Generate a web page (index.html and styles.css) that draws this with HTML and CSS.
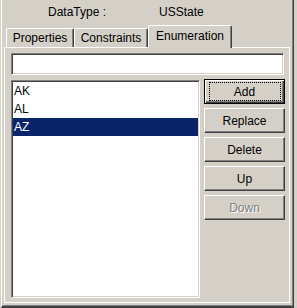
FILE: index.html
```html
<!DOCTYPE html>
<html>
<head>
<meta charset="utf-8">
<link rel="stylesheet" href="styles.css">
</head>
<body>
<div class="frame">
  <div class="header"><span class="label">DataType :</span><span class="value">USState</span></div>
  <div class="tabs">
    <div class="tab t-props">Properties</div>
    <div class="tab t-cons">Constraints</div>
    <div class="tab active t-enum">Enumeration</div>
  </div>
  <div class="panel">
    <div class="field"></div>
    <div class="row">
      <div class="list">
        <div class="item">AK</div>
        <div class="item">AL</div>
        <div class="item selected">AZ</div>
      </div>
      <div class="buttons">
        <div class="btn default">Add</div>
        <div class="btn">Replace</div>
        <div class="btn">Delete</div>
        <div class="btn">Up</div>
        <div class="btn disabled">Down</div>
      </div>
    </div>
  </div>
</div>
</body>
</html>
```
FILE: styles.css
```css
html, body {
  margin: 0;
  padding: 0;
  background: #d4d0c8;
}
body {
  font-family: "Liberation Sans", Arial, sans-serif;
  font-size: 12px;
  color: #000;
  width: 297px;
  height: 308px;
  overflow: hidden;
}
.frame {
  box-sizing: border-box;
  margin-left: 1px;
  width: 293px;
  height: 308px;
  border-left: 1px solid #fff;
  border-right: 1px solid #404040;
  border-bottom: 2px solid #404040;
  box-shadow: inset -1px -1px #808080;
}
.header {
  box-sizing: border-box;
  height: 25px;
  padding: 3px 0 0 46px;
  line-height: 18px;
  display: flex;
}
.label {
  width: 111px;
}
.tabs {
  display: flex;
  align-items: flex-end;
  height: 22px;
  padding-left: 4px;
  position: relative;
  z-index: 1;
}
.tab {
  box-sizing: border-box;
  height: 19px;
  border: 1px solid #fff;
  border-bottom: none;
  border-right-color: #404040;
  box-shadow: inset -1px 0 #808080;
  border-radius: 2px 2px 0 0;
  text-align: center;
  line-height: 14px;
  padding-top: 2px;
  background: #d4d0c8;
}
.t-props { width: 68px; }
.t-cons { width: 74px; }
.t-enum { width: 84px; }
.tab.active {
  height: 23px;
  margin-bottom: -1px;
  padding-top: 3px;
}
.panel {
  box-sizing: border-box;
  margin-left: 2px;
  width: 286px;
  height: 256px;
  border: 1px solid #fff;
  padding: 5px 0 0 6px;
}
.field {
  box-sizing: border-box;
  width: 273px;
  height: 22px;
  background: #fff;
  border: 1px solid;
  border-color: #808080 #fff #fff #808080;
  box-shadow: inset 1px 1px #404040, inset -1px -1px #d4d0c8;
}
.row {
  display: flex;
  gap: 4px;
  margin-top: 4px;
}
.list {
  box-sizing: border-box;
  width: 189px;
  height: 218px;
  margin-top: 1px;
  padding: 1px;
  background: #fff;
  border: 1px solid;
  border-color: #808080 #fff #fff #808080;
  box-shadow: inset 1px 1px #404040, inset -1px -1px #d4d0c8;
}
.item {
  height: 18px;
  line-height: 18px;
  padding-left: 1px;
}
.item.selected {
  background: #0a246a;
  color: #fff;
}
.buttons {
  display: flex;
  flex-direction: column;
  gap: 4px;
  width: 81px;
}
.btn {
  position: relative;
  box-sizing: border-box;
  height: 25px;
  display: flex;
  align-items: center;
  justify-content: center;
  border: 1px solid;
  border-color: #fff #404040 #404040 #fff;
  box-shadow: inset -1px -1px #808080;
}
.btn.default {
  border-color: #000;
  box-shadow: inset 1px 1px #fff, inset -1px -1px #404040, inset -2px -2px #808080;
}
.btn.default::after {
  content: "";
  position: absolute;
  left: 4px;
  top: 2px;
  right: 3px;
  bottom: 2px;
  border: 1px dotted #000;
}
.btn.disabled {
  color: #808080;
  text-shadow: 1px 1px #fff;
}
```
